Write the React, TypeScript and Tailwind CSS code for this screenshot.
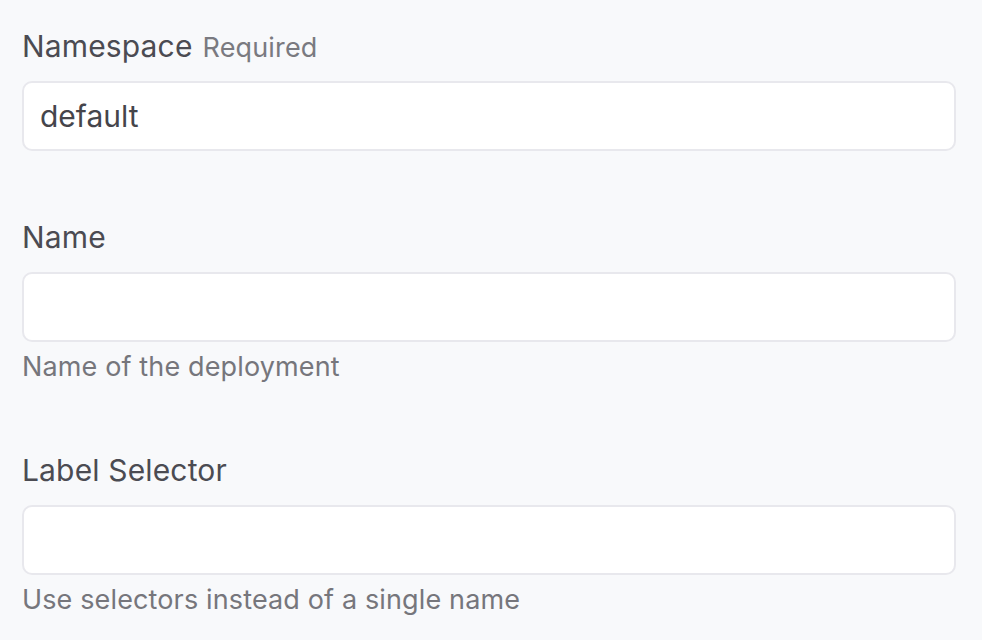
const fields = [
  { label: 'Namespace', required: true, value: 'default', help: '' },
  { label: 'Name', required: false, value: '', help: 'Name of the deployment' },
  { label: 'Label Selector', required: false, value: '', help: 'Use selectors instead of a single name' },
];

const App = () => {
  return (
    <div className="min-h-screen w-full bg-[#f8f9fb] px-[22px] pt-[28px] font-['Inter',sans-serif] antialiased">
      <div className="flex w-[934px] flex-col gap-[68px]">
        {fields.map((f) => (
          <div key={f.label} className="flex flex-col">
            <div className="flex h-[36px] items-baseline gap-[10px] overflow-hidden text-[30px] leading-[36px] tracking-[0.005em] text-[#4b4b52]">
              <span>{f.label}</span>
              {f.required && <span className="text-[27px] text-[#7a7a80]">Required</span>}
            </div>
            <input
              className="mt-[17px] h-[70px] w-full rounded-[10px] border-2 border-[#e8e8ed] bg-white px-[16px] text-[30px] text-[#45454b] outline-none"
              defaultValue={f.value}
            />
            {f.help && (
              <div className="mt-[8px] text-[27px] leading-[34px] tracking-[0.005em] text-[#76767c]">{f.help}</div>
            )}
          </div>
        ))}
      </div>
    </div>
  );
};

export default App;
